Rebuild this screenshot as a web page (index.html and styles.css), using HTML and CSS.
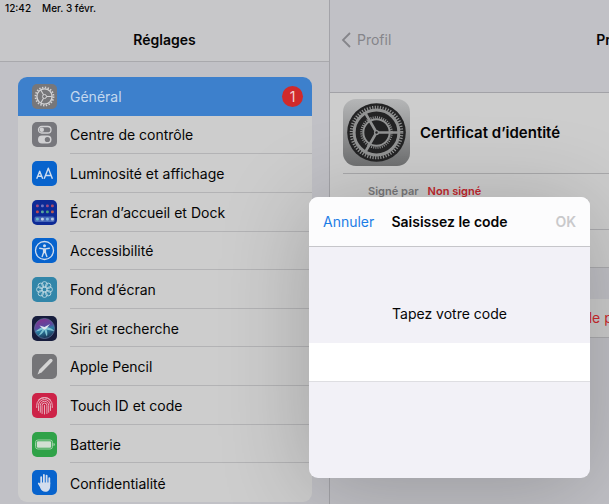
FILE: index.html
```html
<!DOCTYPE html>
<html lang="fr">
<head>
  <meta charset="UTF-8" />
  <meta name="viewport" content="width=device-width, initial-scale=1" />
  <title>Réglages</title>
  <link rel="stylesheet" href="styles.css">
</head>
<body>

  <div class="screen">

    <!-- Colonne des réglages -->
    <aside class="sidebar">
      <header class="sidebar-header">
        <div class="status-bar"><span>12:42</span><span>Mer. 3 févr.</span></div>
        <h1 class="sidebar-title">Réglages</h1>
      </header>

      <nav class="settings-list">
        <a href="#general" class="row selected">
          <svg class="icon" viewBox="0 0 25 25">
            <rect width="25" height="25" rx="5" fill="#77777a"/>
            <g fill="none" stroke="#d4d4d6">
              <circle cx="12.5" cy="12.5" r="7.6" stroke-width="1.4"/>
              <circle cx="12.5" cy="12.5" r="9" stroke-width="1.8" stroke-dasharray="1.4 1.43"/>
              <circle cx="12.5" cy="12.5" r="2" stroke-width="1"/>
              <path d="M14.5 12.5h5.4M11.5 10.8L8.8 6.1M11.5 14.2L8.8 18.9" stroke-width="1.1"/>
            </g>
          </svg>
          <span class="label">Général</span>
          <span class="badge">1</span>
        </a>
        <a href="#controle" class="row">
          <svg class="icon" viewBox="0 0 25 25">
            <rect width="25" height="25" rx="5" fill="#77777c"/>
            <rect x="6.5" y="4.5" width="12.5" height="6.5" rx="3.25" fill="none" stroke="#d0d0d2" stroke-width="1.3"/>
            <circle cx="9.8" cy="7.75" r="2.2" fill="#d0d0d2"/>
            <rect x="6" y="13.5" width="13.5" height="8" rx="4" fill="#d0d0d2"/>
            <circle cx="15.4" cy="17.5" r="2.6" fill="#77777c"/>
          </svg>
          <span class="label">Centre de contrôle</span>
        </a>
        <a href="#luminosite" class="row">
          <svg class="icon" viewBox="0 0 25 25">
            <rect width="25" height="25" rx="5" fill="#0763cd"/>
            <path d="M4.7 17.8l3-7.6 3 7.6M5.7 15.3h4M12.2 17.8l4.1-10.6 4.1 10.6M13.6 14.5h5.4" fill="none" stroke="#cfdcee" stroke-width="1.4" stroke-linejoin="round"/>
          </svg>
          <span class="label">Luminosité et affichage</span>
        </a>
        <a href="#accueil" class="row">
          <svg class="icon" viewBox="0 0 25 25">
            <rect width="25" height="25" rx="5" fill="#0d2a96"/>
            <rect x="2.5" y="16.5" width="20" height="5.5" rx="1.5" fill="#4768b8"/>
            <g fill="#a14a80">
              <rect x="4" y="4.5" width="2.8" height="2.8" rx="1"/>
              <rect x="9" y="4.5" width="2.8" height="2.8" rx="1" fill="#6d76c5"/>
              <rect x="14" y="4.5" width="2.8" height="2.8" rx="1"/>
              <rect x="19" y="4.5" width="2.8" height="2.8" rx="1" fill="#b14c64"/>
              <rect x="4" y="10.5" width="2.8" height="2.8" rx="1" fill="#c24a50"/>
              <rect x="9" y="10.5" width="2.8" height="2.8" rx="1" fill="#5ba5a0"/>
              <rect x="14" y="10.5" width="2.8" height="2.8" rx="1" fill="#4d9f80"/>
              <rect x="19" y="10.5" width="2.8" height="2.8" rx="1" fill="#bd5b50"/>
              <rect x="4" y="17.8" width="2.8" height="2.8" rx="1" fill="#67b7c5"/>
              <rect x="9" y="17.8" width="2.8" height="2.8" rx="1" fill="#c6d2e4"/>
              <rect x="14" y="17.8" width="2.8" height="2.8" rx="1" fill="#82b5e0"/>
              <rect x="19" y="17.8" width="2.8" height="2.8" rx="1" fill="#b8c8de"/>
            </g>
          </svg>
          <span class="label">Écran d’accueil et Dock</span>
        </a>
        <a href="#accessibilite" class="row">
          <svg class="icon" viewBox="0 0 25 25">
            <rect width="25" height="25" rx="5" fill="#0763cd"/>
            <circle cx="12.5" cy="12.5" r="9" fill="none" stroke="#cfdcee" stroke-width="1.3"/>
            <circle cx="12.5" cy="7.7" r="1.5" fill="#cfdcee"/>
            <path d="M7.7 10.3l3.6.6h2.4l3.600-.6M12.5 11v3.5M11.6 11.3v3.2L10.2 18.600M13.4 11.300v3.200l1.400 4.100" fill="none" stroke="#cfdcee" stroke-width="1.4" stroke-linecap="round" stroke-linejoin="round"/>
          </svg>
          <span class="label">Accessibilité</span>
        </a>
        <a href="#fond" class="row">
          <svg class="icon" viewBox="0 0 25 25">
            <rect width="25" height="25" rx="5" fill="#3286a9"/>
            <g fill="none" stroke="#bcd8e2" stroke-width="0.9">
              <circle cx="12.5" cy="12.5" r="2.4"/>
              <circle cx="12.5" cy="7.3" r="2.7"/>
              <circle cx="16.2" cy="8.8" r="2.7"/>
              <circle cx="17.7" cy="12.5" r="2.7"/>
              <circle cx="16.2" cy="16.2" r="2.7"/>
              <circle cx="12.5" cy="17.7" r="2.7"/>
              <circle cx="8.8" cy="16.2" r="2.7"/>
              <circle cx="7.3" cy="12.5" r="2.7"/>
              <circle cx="8.8" cy="8.8" r="2.7"/>
            </g>
          </svg>
          <span class="label">Fond d’écran</span>
        </a>
        <a href="#siri" class="row">
          <svg class="icon" viewBox="0 0 25 25">
            <defs>
              <linearGradient id="siri" x1="0.2" y1="0" x2="0.5" y2="1">
                <stop offset="0" stop-color="#8a2f8c"/>
                <stop offset="0.45" stop-color="#5a4aa0"/>
                <stop offset="0.6" stop-color="#2b7fa4"/>
                <stop offset="1" stop-color="#1a3354"/>
              </linearGradient>
            </defs>
            <rect width="25" height="25" rx="5" fill="#171d3d"/>
            <circle cx="12.5" cy="12.5" r="10" fill="url(#siri)" stroke="#597099" stroke-width="0.8"/>
            <path d="M3 15.500c3-1.500 5-4.500 9.500-4.500s6.500 1 10 4c-3.500-.5-5.500-.8-8-1.500 1 2.500 1 4.500.5 7-1.500-2-2-4.500-2.500-6.500-1.500 3-3.500 5-6.500 6 2-2.200 3-4 4.500-6.500-2.500 1-5 2-7.500 2z" fill="#7fc3d2"/>
            <path d="M7.500 9.500l5 1.500 5.500-3-3.500 4.500-2 1.200-2-1.200z" fill="#dfe6ee"/>
          </svg>
          <span class="label">Siri et recherche</span>
        </a>
        <a href="#pencil" class="row">
          <svg class="icon" viewBox="0 0 25 25">
            <rect width="25" height="25" rx="5" fill="#757578"/>
            <path d="M9 16.6L18.8 6.6" stroke="#d4d4d4" stroke-width="3.6" stroke-linecap="round"/>
            <path d="M7.5 15.5l2.6 2.5-4.6 2.4z" fill="#d4d4d4"/>
          </svg>
          <span class="label">Apple Pencil</span>
        </a>
        <a href="#touchid" class="row">
          <svg class="icon" viewBox="0 0 25 25">
            <rect width="25" height="25" rx="5" fill="#cd2348"/>
            <g fill="none" stroke="#e8bcc6" stroke-width="0.9" stroke-linecap="round">
              <path d="M6.5 6.8a8.5 8.5 0 0 1 12 0"/>
              <path d="M4.7 14.5v-2a7.8 7.8 0 0 1 15.6 0v2"/>
              <path d="M6.5 17.5v-5a6 6 0 0 1 12 0v5"/>
              <path d="M8.3 19.3v-6.8a4.2 4.2 0 0 1 8.4 0v6.8"/>
              <path d="M10.1 20.5v-8a2.4 2.4 0 0 1 4.8 0v8"/>
              <path d="M12.5 12.5v8.5"/>
            </g>
          </svg>
          <span class="label">Touch ID et code</span>
        </a>
        <a href="#batterie" class="row">
          <svg class="icon" viewBox="0 0 25 25">
            <rect width="25" height="25" rx="5" fill="#2fa248"/>
            <rect x="3.5" y="8" width="17" height="9" rx="2.4" fill="none" stroke="#a9d5b0" stroke-width="0.9"/>
            <rect x="4.8" y="9.3" width="14.4" height="6.4" rx="1.3" fill="#d2dfd3"/>
            <path d="M21.5 11v3c1-.2 1.3-.8 1.3-1.5s-.3-1.3-1.3-1.5z" fill="#a9d5b0"/>
          </svg>
          <span class="label">Batterie</span>
        </a>
        <a href="#confidentialite" class="row">
          <svg class="icon" viewBox="0 0 25 25">
            <rect width="25" height="25" rx="5" fill="#0763cd"/>
            <path d="M9.2 14V7.2M11.9 13V4.9M14.6 13V5.6M17.3 14V8.2M9.3 17.5L6.8 13.5" fill="none" stroke="#d3dded" stroke-width="1.8" stroke-linecap="round"/>
            <path d="M8.3 12.5h9.9v3.5c0 3.8-1.9 5.8-4.9 5.8-2.5 0-3.9-1.3-5-3.8z" fill="#d3dded"/>
          </svg>
          <span class="label">Confidentialité</span>
        </a>
      </nav>
    </aside>

    <!-- Détail du profil -->
    <main class="detail">
      <div class="detail-content">
        <header class="detail-header">
          <a href="#profil" class="back">
            <svg class="chevron" viewBox="0 0 10 16"><path d="M9 1L2 8l7 7" fill="none" stroke="#85858a" stroke-width="1.8"/></svg>
            Profil
          </a>
          <h2 class="detail-title">Profil</h2>
        </header>

        <section class="certificate">
          <div class="certificate-head">
            <svg class="big-icon" viewBox="0 0 67 67">
              <defs>
                <linearGradient id="metal" x1="0" y1="0" x2="0" y2="1">
                  <stop offset="0" stop-color="#b5b6b7"/>
                  <stop offset="1" stop-color="#707172"/>
                </linearGradient>
              </defs>
              <rect width="67" height="67" rx="13" fill="url(#metal)"/>
              <circle cx="33.5" cy="33.5" r="29.3" fill="#232324"/>
              <g fill="none" stroke="#929393">
                <circle cx="33.5" cy="33.5" r="22.4" stroke-width="3"/>
                <circle cx="33.5" cy="33.5" r="25.2" stroke-width="3.2" stroke-dasharray="1.2 1.44"/>
                <circle cx="33.5" cy="33.5" r="13.2" stroke-width="2"/>
                <circle cx="33.5" cy="33.5" r="15.2" stroke-width="2.2" stroke-dasharray="1 1.17"/>
                <path d="M33.5 33.5H56M33.5 33.5L22.25 14M33.5 33.5L22.25 53" stroke-width="2.6"/>
              </g>
              <circle cx="33.5" cy="33.5" r="2.6" fill="#929393"/>
              <circle cx="33.5" cy="33.5" r="1.2" fill="#232324"/>
            </svg>
            <h3 class="certificate-name">Certificat d’identité</h3>
          </div>
          <div class="certificate-info">
            <span class="info-label">Signé par</span>
            <span class="info-value">Non signé</span>
          </div>
          <div class="certificate-more"></div>
        </section>

        <button class="remove-button">Supprimer le profil téléchargé</button>
      </div>
    </main>

    <!-- Saisie du code -->
    <form class="modal" role="dialog" aria-labelledby="modal-title">
      <header class="modal-header">
        <button type="button" class="cancel-button">Annuler</button>
        <h2 class="modal-title" id="modal-title">Saisissez le code</h2>
        <button type="submit" class="ok-button" disabled>OK</button>
      </header>
      <label class="modal-label" for="code">Tapez votre code</label>
      <input type="password" class="code-input" id="code" />
    </form>

  </div>

</body>
</html>
```
FILE: styles.css
```css
/* ===== Base ===== */
* {
  box-sizing: border-box;
}

body {
  margin: 0;
  font-family: Inter, "Liberation Sans", sans-serif;
  font-size: 14px;
  line-height: 20px;
  color: #050505;
  background-color: #c1c1c6;
}

h1,
h2,
h3 {
  margin: 0;
  font-size: 14px;
  font-weight: 600;
}

a {
  color: inherit;
  text-decoration: none;
}

button {
  font: inherit;
  border: none;
  background: none;
  padding: 0;
  cursor: pointer;
}

.screen {
  position: relative;
  display: flex;
  height: 100vh;
  min-height: 480px;
  overflow: hidden;
}

/* ===== Colonne de gauche ===== */
.sidebar {
  display: flex;
  flex-direction: column;
  flex: 0 0 330px;
  border-right: 1px solid #a3a3a8;
}

.sidebar-header {
  padding-bottom: 11px;
  background-color: #c7c7c9;
  border-bottom: 1px solid #a9a9ad;
}

.status-bar {
  display: flex;
  gap: 11px;
  padding: 0 5px;
  margin-bottom: 14px;
  font-size: 10px;
  font-weight: 500;
  line-height: 16px;
}

.sidebar-title {
  text-align: center;
}

.settings-list {
  flex: 1;
  display: flex;
  flex-direction: column;
  margin: 15px 17px 2px 18px;
  border-radius: 9px;
  background-color: #cdcdcd;
  overflow: hidden;
}

.row {
  flex: 1;
  display: flex;
  align-items: center;
  gap: 13px;
  padding-left: 14px;
}

.icon {
  width: 25px;
  height: 25px;
  flex-shrink: 0;
}

.label {
  flex: 1;
  align-self: stretch;
  display: flex;
  align-items: center;
  padding-top: 2px;
  border-bottom: 1px solid #b3b3b5;
}

.row:last-child .label,
.selected .label {
  border-bottom: none;
}

.selected {
  padding-right: 9px;
  background-color: #3d80cc;
  color: #c4d8ee;
}

.badge {
  width: 21px;
  height: 21px;
  border-radius: 50%;
  background-color: #d02a2b;
  color: #f0d2d2;
  line-height: 21px;
  text-align: center;
}

/* ===== Détail ===== */
.detail {
  flex: 1;
  min-width: 0;
  overflow: hidden;
}

/* le contenu garde sa largeur et déborde à droite */
.detail-content {
  min-width: 568px;
}

.detail-header {
  display: grid;
  grid-template-columns: 1fr auto 1fr;
  padding: 30px 11px 42px;
  border-bottom: 1px solid #a2a2a7;
}

.back {
  display: flex;
  align-items: center;
  gap: 6px;
  color: #85858a;
}

.chevron {
  width: 10px;
  height: 16px;
}

.certificate {
  background-color: #cdcdcd;
  border-bottom: 1px solid #acacaf;
}

.certificate-head {
  display: flex;
  align-items: center;
  gap: 10px;
  margin-left: 13px;
  padding: 6px 0 7px;
  border-bottom: 1px solid #a9a9ab;
}

.big-icon {
  width: 67px;
  height: 67px;
}

.certificate-name {
  font-size: 15px;
}

.certificate-info {
  display: flex;
  gap: 9px;
  margin-left: 13px;
  padding: 7px 25px 28px;
  border-bottom: 1px solid #acacaf;
  font-size: 11px;
  font-weight: 600;
}

.info-label {
  color: #777779;
}

.info-value {
  color: #c2272d;
}

.certificate-more {
  height: 37px;
}

.remove-button {
  width: 100%;
  height: 39px;
  margin-top: 31px;
  background-color: #cdcdcd;
  border-bottom: 1px solid #acacaf;
  color: #cf2a2d;
}

/* ===== Fenêtre du code ===== */
.modal {
  position: absolute;
  top: 197px;
  left: 309px;
  width: 281px;
  padding-bottom: 96px;
  border-radius: 9px;
  background-color: #f2f1f7;
  box-shadow: 0 10px 90px rgba(0, 0, 0, 0.22);
  overflow: hidden;
}

.modal-header {
  display: grid;
  grid-template-columns: 1fr auto 1fr;
  padding: 15px 14px 14px;
  background-color: #fcfcfd;
  border-bottom: 1px solid #c6c6ca;
}

.cancel-button {
  justify-self: start;
  color: #1c7de6;
}

.ok-button {
  justify-self: end;
  color: #c9c9cb;
  font-weight: 600;
}

.modal-label {
  display: block;
  padding: 57px 0 19px;
  text-align: center;
}

.code-input {
  display: block;
  width: 100%;
  height: 39px;
  padding: 0 14px;
  border: none;
  border-bottom: 1px solid #dedee2;
  background-color: #fff;
  font: inherit;
  outline: none;
}
```
